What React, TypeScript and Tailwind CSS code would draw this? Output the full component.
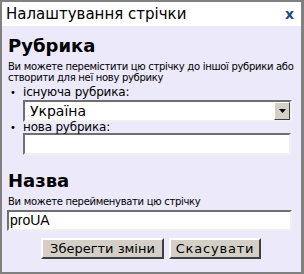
export default function App() {
  return (
    <div className="w-[304px] h-[274px] bg-[#808080] pt-[2px] pl-[2px] pr-[3px] pb-[2px] font-['DejaVu_Sans',sans-serif]">
      <div className="h-full flex flex-col bg-[#ebe9fa]">
        {/* Заголовок вікна */}
        <div className="h-[24px] bg-white flex items-center justify-between pl-[4px] pr-[7px]">
          <span className="text-[15px] text-black">Налаштування стрічки</span>
          <span className="text-[14px] font-bold text-[#1b4a8c] leading-none">x</span>
        </div>

        <div className="pl-[6px] pr-[2px] pt-[9px]">
          {/* Рубрика */}
          <h2 className="text-[18px] font-bold text-black leading-[22px]">Рубрика</h2>
          <p className="text-[10px] leading-[11px] tracking-[-0.3px] text-black mt-[4px] whitespace-nowrap">
            Ви можете перемістити цю стрічку до іншої рубрики або
            <br />
            створити для неї нову рубрику
          </p>
          <ul className="mt-[4px]">
            <li className="flex items-start">
              <span className="w-[15px] text-[10px] leading-[11px] pl-[2px]">•</span>
              <div className="flex-1">
                <div className="text-[12px] leading-[11px] tracking-[-0.2px]">існуюча рубрика:</div>
                <div className="mt-[2px] w-[269px] h-[22px] bg-white border-2 border-t-[#6f6f6f] border-l-[#6f6f6f] border-b-[#f0f0f0] border-r-[#f0f0f0] flex items-center">
                  <span className="flex-1 pl-[5px] text-[14px]">Україна</span>
                  <span className="w-[16px] h-[18px] bg-[#d4d0c8] border border-t-white border-l-white border-b-[#404040] border-r-[#404040] flex items-center justify-center">
                    <svg width="7" height="4" viewBox="0 0 7 4">
                      <path d="M0 0h7L3.5 4z" fill="#000" />
                    </svg>
                  </span>
                </div>
              </div>
            </li>
            <li className="flex items-start">
              <span className="w-[15px] text-[10px] leading-[11px] pl-[2px]">•</span>
              <div className="flex-1">
                <div className="text-[12px] leading-[11px] tracking-[-0.2px]">нова рубрика:</div>
                <div className="w-[268px] h-[22px] bg-white border-2 border-t-[#6f6f6f] border-l-[#6f6f6f] border-b-[#f0f0f0] border-r-[#f0f0f0]" />
              </div>
            </li>
          </ul>

          {/* Назва */}
          <h2 className="text-[18px] font-bold text-black leading-[22px] mt-[15px]">Назва</h2>
          <p className="text-[10px] leading-[11px] tracking-[-0.3px] text-black mt-[4px]">
            Ви можете перейменувати цю стрічку
          </p>
          <div className="mt-[3px] -ml-[1px] w-[285px] h-[21px] bg-white border-2 border-t-[#6f6f6f] border-l-[#6f6f6f] border-b-[#f0f0f0] border-r-[#f0f0f0] flex items-center">
            <span className="pl-[1px] text-[14px] font-['Liberation_Sans',sans-serif]">proUA</span>
          </div>
          <div className="flex gap-[5px] mt-[7px] pl-[33px]">
            <button className="w-[123px] h-[21px] bg-[#d4d0c8] text-[13px] border-2 border-t-white border-l-white border-b-[#404040] border-r-[#404040] flex items-center justify-center">
              Зберегти зміни
            </button>
            <button className="w-[92px] h-[21px] bg-[#d4d0c8] text-[13px] tracking-[0.8px] border-2 border-t-white border-l-white border-b-[#404040] border-r-[#404040] flex items-center justify-center">
              Скасувати
            </button>
          </div>
        </div>
      </div>
    </div>
  );
}
